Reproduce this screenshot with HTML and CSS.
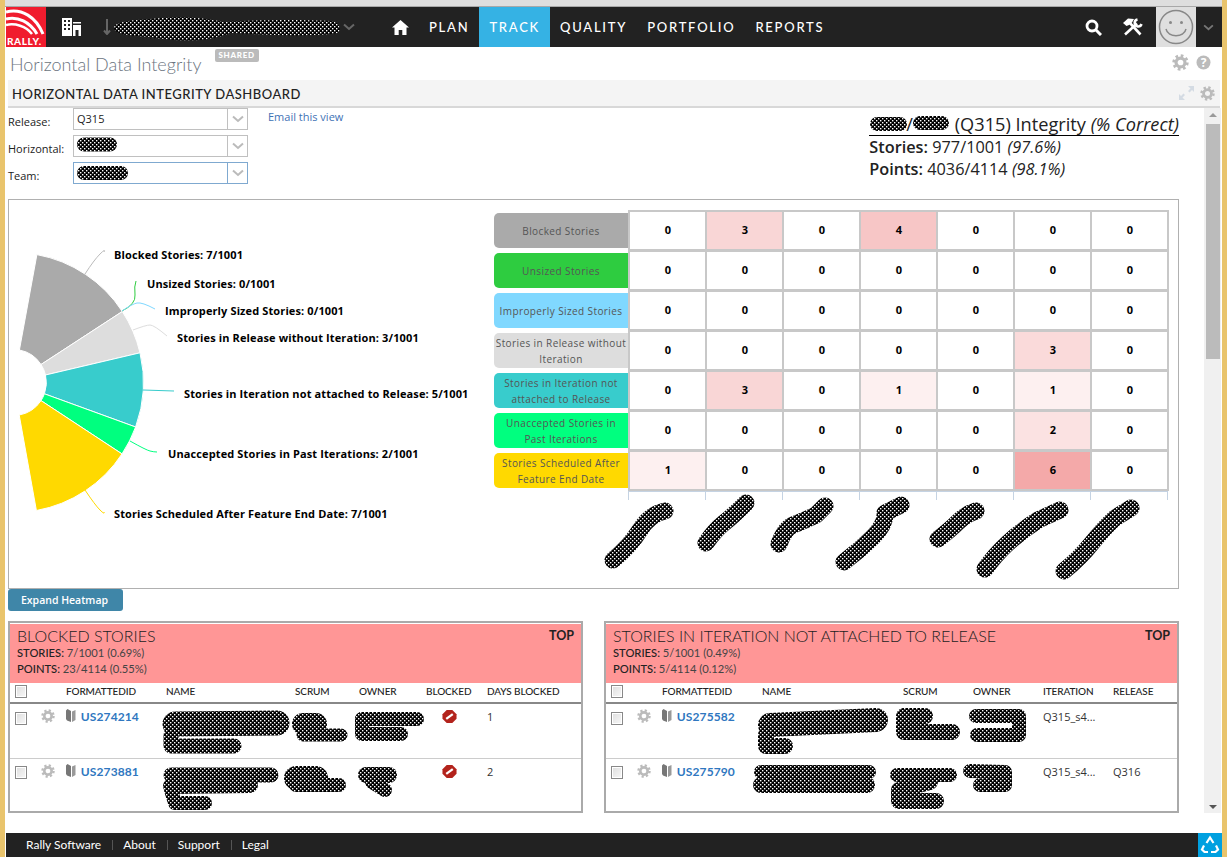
FILE: index.html
```html
<!DOCTYPE html>
<html lang="en">
<head>
    <meta charset="UTF-8">
    <title>Horizontal Data Integrity</title>
    <link rel="stylesheet" href="styles.css">
</head>
<body>
    <svg class="defs" width="0" height="0">
        <defs>
            <pattern id="dots" width="4" height="4" patternUnits="userSpaceOnUse">
                <rect width="4" height="4" fill="#000"/>
                <rect x="0" y="0" width="1.400" height="1.400" fill="#fff"/>
                <rect x="2" y="2" width="1.400" height="1.400" fill="#fff"/>
            </pattern>
            <symbol id="gear" viewBox="0 0 16 16">
                <circle cx="8" cy="8" r="4.2" fill="none" stroke="currentColor" stroke-width="3"/>
                <circle cx="8" cy="8" r="6.4" fill="none" stroke="currentColor" stroke-width="2.6" stroke-dasharray="2.5 2.53"/>
            </symbol>
            <symbol id="chevron" viewBox="0 0 12 8">
                <path d="M1 1.5l5 4.5 5-4.5" fill="none" stroke="currentColor" stroke-width="2"/>
            </symbol>
            <symbol id="book" viewBox="0 0 10 14">
                <path d="M0 1.5L1.5 0 5 2v11L1 11.5 0 10z" fill="#777"/>
                <path d="M6 2.5L9.5 1v10L6 13z" fill="#999"/>
            </symbol>
            <symbol id="blocked" viewBox="0 0 16 16">
                <polygon points="5,1 11,1 15.5,5.5 15.5,10.5 11,15 5,15 .5,10.5 .5,5.5" fill="#b3231c"/>
                <path d="M4.5 10.5l7-5" stroke="#fff" stroke-width="2.4"/>
            </symbol>
        </defs>
    </svg>

    <div class="frame">
        <nav class="topbar">
            <div class="logo">
                <svg class="logo-arcs" width="40" height="28" viewBox="0 0 40 28">
                    <path d="M0 5C16 1 30 10 37 27" fill="none" stroke="#fff" stroke-width="3"/>
                    <path d="M0 12C12 9 24 15 31 27" fill="none" stroke="#fff" stroke-width="3"/>
                    <path d="M0 18C9 16 20 19 26 27" fill="none" stroke="#fff" stroke-width="2.5"/>
                </svg>
                <span class="logo-text">RALLY.</span>
            </div>
            <svg class="nav-building" width="19" height="19" viewBox="0 0 19 19">
                <rect x="0" y="0" width="10" height="18" fill="#fff"/>
                <rect x="11" y="4" width="8" height="14" fill="#fff"/>
                <rect x="11" y="5.5" width="8" height="1.5" fill="#222"/>
                <rect x="13.5" y="12" width="3" height="6" fill="#222"/>
                <g fill="#222">
                    <rect x="2" y="2" width="2" height="2"/><rect x="6" y="2" width="2" height="2"/>
                    <rect x="2" y="6" width="2" height="2"/><rect x="6" y="6" width="2" height="2"/>
                    <rect x="2" y="10" width="2" height="2"/><rect x="6" y="10" width="2" height="2"/>
                </g>
            </svg>
            <svg class="nav-down" width="8" height="16" viewBox="0 0 8 16">
                <path d="M4 0v15M1 11.5L4 15l3-3.500" fill="none" stroke="#666" stroke-width="2"/>
            </svg>
            <div class="project-name"></div>
            <svg class="nav-chevron" width="12" height="8"><use href="#chevron"/></svg>

            <svg class="nav-home" width="17" height="15" viewBox="0 0 17 15">
                <path d="M8.500 0L17 7.500h-2.500V15H10.300v-5H6.700v5H2.500V7.500H0z" fill="#fff"/>
            </svg>
            <a class="nav-link">PLAN</a>
            <a class="nav-link nav-active">TRACK</a>
            <a class="nav-link">QUALITY</a>
            <a class="nav-link">PORTFOLIO</a>
            <a class="nav-link">REPORTS</a>

            <div class="nav-right">
                <svg width="17" height="17" viewBox="0 0 17 17">
                    <circle cx="7" cy="7" r="5" fill="none" stroke="#fff" stroke-width="2.800"/>
                    <path d="M10.500 10.500L16 16" stroke="#fff" stroke-width="3"/>
                </svg>
                <svg class="nav-tools" width="20" height="18" viewBox="0 0 20 18">
                    <path d="M6 4L17.500 16.500" stroke="#fff" stroke-width="2.600"/>
                    <path d="M0 5L5 .5 11 1 9 4.500 6 7 3.500 8z" fill="#fff"/>
                    <path d="M2 16.500L14 5.500" stroke="#fff" stroke-width="2.600"/>
                    <path d="M14.500 1.500A3.500 3.500 0 1 0 18.500 6" fill="none" stroke="#fff" stroke-width="2.500"/>
                </svg>
                <div class="avatar">
                    <svg width="36" height="36" viewBox="0 0 36 36">
                        <circle cx="18" cy="18" r="16.500" fill="none" stroke="#888" stroke-width="1.500"/>
                        <circle cx="12.500" cy="13.500" r="1.500" fill="#888"/>
                        <circle cx="23.500" cy="13.500" r="1.500" fill="#888"/>
                        <path d="M8 20c2 9 18 9 20 0" fill="none" stroke="#888" stroke-width="1.500"/>
                    </svg>
                </div>
                <svg class="nav-chevron-small" width="11" height="7"><use href="#chevron"/></svg>
            </div>
        </nav>

        <header class="page-title">
            <h1>Horizontal Data Integrity</h1>
            <span class="shared">SHARED</span>
            <div class="page-tools">
                <svg class="icon-gray" width="17" height="17"><use href="#gear"/></svg>
                <svg width="15" height="15" viewBox="0 0 15 15">
                    <circle cx="7.500" cy="7.500" r="7" fill="#bbb"/>
                    <text x="7.500" y="11.500" class="help-mark">?</text>
                </svg>
            </div>
        </header>

        <div class="panel-header">
            <h2>Horizontal Data Integrity Dashboard</h2>
            <div class="panel-tools">
                <svg width="15" height="14" viewBox="0 0 15 14">
                    <path d="M9 0h6v6l-2-2-2.500 2.500-1.500-1.500L11.500 2.500zM6 14H0V8l2 2 2.500-2.500L6 9l-2.500 2.500z" fill="#d4dbe3"/>
                </svg>
                <svg class="icon-gray" width="15" height="15"><use href="#gear"/></svg>
            </div>
        </div>

        <div class="content">
            <main class="main">
                <section class="controls">
                    <form class="filters">
                        <label class="filter-row">
                            <span class="filter-label">Release:</span>
                            <span class="combo"><span class="combo-value">Q315</span><span class="combo-trigger"><svg width="12" height="8"><use href="#chevron"/></svg></span></span>
                        </label>
                        <label class="filter-row">
                            <span class="filter-label">Horizontal:</span>
                            <span class="combo"><span class="combo-value"></span><span class="combo-trigger"><svg width="12" height="8"><use href="#chevron"/></svg></span></span>
                        </label>
                        <label class="filter-row">
                            <span class="filter-label">Team:</span>
                            <span class="combo combo-focus"><span class="combo-value"></span><span class="combo-trigger"><svg width="12" height="8"><use href="#chevron"/></svg></span></span>
                        </label>
                    </form>
                    <a class="email-link">Email this view</a>
                    <div class="summary">
                        <div class="summary-title"><span class="name-gap"></span>/<span class="name-gap"></span> (Q315) Integrity <em>(% Correct)</em></div>
                        <div class="summary-line"><span class="summary-key">Stories:</span> 977/1001 <em>(97.6%)</em></div>
                        <div class="summary-line"><span class="summary-key">Points:</span> 4036/4114 <em>(98.1%)</em></div>
                    </div>
                </section>

                <section class="chart-box">
                    <svg class="pie" width="485" height="388" viewBox="9 200 485 388">
                        <g stroke="#fff" stroke-width="1">
                            <path fill="#aaaaaa" d="M36.9 254.6A130 130 0 0 1 122.3 311.500L41 364.500A33 33 0 0 0 19.400 350z"/>
                            <path fill="#dddddd" d="M122.300 311.500A130 130 0 0 1 140 352.800L45.500 375A33 33 0 0 0 41 364.500z"/>
                            <path fill="#38cccc" d="M140 352.800A130 130 0 0 1 135.600 427L44.400 393.800A33 33 0 0 0 45.500 375z"/>
                            <path fill="#00ff7f" d="M135.600 427A130 130 0 0 1 122 453.900L41 400.600A33 33 0 0 0 44.400 393.800z"/>
                            <path fill="#ffd900" d="M122 453.900A130 130 0 0 1 36.400 510.500L19.200 415A33 33 0 0 0 41 400.600z"/>
                        </g>
                        <g fill="none" stroke-width="1">
                            <path stroke="#bbbbbb" d="M85 274Q94 260 100 254T104 252"/>
                            <path stroke="#2ecc40" d="M122 311Q136 304 135 295T136 281"/>
                            <path stroke="#80d8ff" d="M122 311Q132 304 137 303T155 309"/>
                            <path stroke="#dddddd" d="M133 330Q146 325 150 325T167 336"/>
                            <path stroke="#38cccc" d="M143 390L174 391"/>
                            <path stroke="#00ff7f" d="M130 441Q146 450 150 451T157 452"/>
                            <path stroke="#ffd900" d="M85 490Q95 505 100 510T104 512"/>
                        </g>
                        <g class="pie-labels">
                            <text x="114" y="259">Blocked Stories: 7/1001</text>
                            <text x="147" y="288">Unsized Stories: 0/1001</text>
                            <text x="165" y="315">Improperly Sized Stories: 0/1001</text>
                            <text x="177" y="342">Stories in Release without Iteration: 3/1001</text>
                            <text x="184" y="398">Stories in Iteration not attached to Release: 5/1001</text>
                            <text x="168" y="458">Unaccepted Stories in Past Iterations: 2/1001</text>
                            <text x="114" y="518">Stories Scheduled After Feature End Date: 7/1001</text>
                        </g>
                    </svg>

                    <div class="heat">
                        <div class="heat-grid">
                            <div class="heat-label label-blocked">Blocked Stories</div>
                            <div class="cell">0</div><div class="cell heat-3">3</div><div class="cell">0</div><div class="cell heat-4">4</div><div class="cell">0</div><div class="cell">0</div><div class="cell">0</div>
                            <div class="heat-label label-unsized">Unsized Stories</div>
                            <div class="cell">0</div><div class="cell">0</div><div class="cell">0</div><div class="cell">0</div><div class="cell">0</div><div class="cell">0</div><div class="cell">0</div>
                            <div class="heat-label label-improper">Improperly Sized Stories</div>
                            <div class="cell">0</div><div class="cell">0</div><div class="cell">0</div><div class="cell">0</div><div class="cell">0</div><div class="cell">0</div><div class="cell">0</div>
                            <div class="heat-label label-release">Stories in Release without Iteration</div>
                            <div class="cell">0</div><div class="cell">0</div><div class="cell">0</div><div class="cell">0</div><div class="cell">0</div><div class="cell heat-3b">3</div><div class="cell">0</div>
                            <div class="heat-label label-iteration">Stories in Iteration not attached to Release</div>
                            <div class="cell">0</div><div class="cell heat-3">3</div><div class="cell">0</div><div class="cell heat-1">1</div><div class="cell">0</div><div class="cell heat-1">1</div><div class="cell">0</div>
                            <div class="heat-label label-past">Unaccepted Stories in Past Iterations</div>
                            <div class="cell">0</div><div class="cell">0</div><div class="cell">0</div><div class="cell">0</div><div class="cell">0</div><div class="cell heat-2">2</div><div class="cell">0</div>
                            <div class="heat-label label-late">Stories Scheduled After Feature End Date</div>
                            <div class="cell heat-1">1</div><div class="cell">0</div><div class="cell">0</div><div class="cell">0</div><div class="cell">0</div><div class="cell heat-6">6</div><div class="cell">0</div>
                        </div>
                        <div class="heat-axis">
                            <span></span><span></span><span></span><span></span><span></span><span></span><span></span>
                        </div>
                    </div>
                </section>

                <button class="expand-btn" type="button">Expand Heatmap</button>

                <section class="boards">
                    <div class="board">
                        <div class="board-head">
                            <div class="board-title"><span>Blocked Stories</span><a class="board-top">TOP</a></div>
                            <div class="board-stat"><b>STORIES:</b> 7/1001 (0.69%)</div>
                            <div class="board-stat"><b>POINTS:</b> 23/4114 (0.55%)</div>
                        </div>
                        <table class="grid">
                            <colgroup><col class="c-check"><col class="c-gear"><col class="c-id"><col class="c-l1"><col class="c-l2"><col class="c-l3"><col class="c-l4"><col></colgroup>
                            <thead>
                                <tr><th class="td-check"><span class="check"></span></th><th></th><th>FormattedID</th><th>Name</th><th>Scrum</th><th>Owner</th><th>Blocked</th><th>Days Blocked</th></tr>
                            </thead>
                            <tbody>
                                <tr>
                                    <td class="td-check"><span class="check"></span></td>
                                    <td><svg class="icon-gray" width="14" height="14"><use href="#gear"/></svg></td>
                                    <td><svg class="book" width="10" height="14"><use href="#book"/></svg> <a class="story-id">US274214</a></td>
                                    <td></td><td></td><td></td>
                                    <td class="td-flag"><svg width="15" height="15"><use href="#blocked"/></svg></td>
                                    <td>1</td>
                                </tr>
                                <tr>
                                    <td class="td-check"><span class="check"></span></td>
                                    <td><svg class="icon-gray" width="14" height="14"><use href="#gear"/></svg></td>
                                    <td><svg class="book" width="10" height="14"><use href="#book"/></svg> <a class="story-id">US273881</a></td>
                                    <td></td><td></td><td></td>
                                    <td class="td-flag"><svg width="15" height="15"><use href="#blocked"/></svg></td>
                                    <td>2</td>
                                </tr>
                            </tbody>
                        </table>
                    </div>

                    <div class="board">
                        <div class="board-head">
                            <div class="board-title"><span>Stories in Iteration not attached to Release</span><a class="board-top">TOP</a></div>
                            <div class="board-stat"><b>STORIES:</b> 5/1001 (0.49%)</div>
                            <div class="board-stat"><b>POINTS:</b> 5/4114 (0.12%)</div>
                        </div>
                        <table class="grid">
                            <colgroup><col class="c-check"><col class="c-gear"><col class="c-id"><col class="c-r1"><col class="c-r2"><col class="c-r3"><col class="c-r4"><col></colgroup>
                            <thead>
                                <tr><th class="td-check"><span class="check"></span></th><th></th><th>FormattedID</th><th>Name</th><th>Scrum</th><th>Owner</th><th>Iteration</th><th>Release</th></tr>
                            </thead>
                            <tbody>
                                <tr>
                                    <td class="td-check"><span class="check"></span></td>
                                    <td><svg class="icon-gray" width="14" height="14"><use href="#gear"/></svg></td>
                                    <td><svg class="book" width="10" height="14"><use href="#book"/></svg> <a class="story-id">US275582</a></td>
                                    <td></td><td></td><td></td>
                                    <td>Q315_s4...</td><td></td>
                                </tr>
                                <tr>
                                    <td class="td-check"><span class="check"></span></td>
                                    <td><svg class="icon-gray" width="14" height="14"><use href="#gear"/></svg></td>
                                    <td><svg class="book" width="10" height="14"><use href="#book"/></svg> <a class="story-id">US275790</a></td>
                                    <td></td><td></td><td></td>
                                    <td>Q315_s4...</td><td>Q316</td>
                                </tr>
                            </tbody>
                        </table>
                    </div>
                </section>
            </main>

            <div class="scrollbar">
                <span class="arrow-up"></span>
                <span class="thumb"></span>
                <span class="arrow-down"></span>
            </div>
        </div>

        <footer class="footer">
            <a>Rally Software</a><a>About</a><a>Support</a><a>Legal</a>
            <div class="recycle">
                <svg width="20" height="20" viewBox="0 0 20 20">
                    <g fill="none" stroke="#fff" stroke-width="2.200">
                        <path d="M6.500 8L10 2.500 13.500 8"/>
                        <path d="M16 10.500l2 4-2.500 2.500H11"/>
                        <path d="M4 10.500l-2 4L4.500 17H8"/>
                    </g>
                </svg>
            </div>
        </footer>
    </div>

    <!-- blacked out names, drawn over the page -->
    <svg class="redactions" width="1227" height="859" viewBox="0 0 1227 859">
        <path fill="url(#dots)" d="M114 28C114 22 130 20 150 19C180 16 200 17 225 22C250 20 300 19 330 21C341 22 341 30 338 33C300 38 260 34 230 33C210 42 180 42 150 37C130 36 114 34 114 28Z"/>
        <g fill="none" stroke="url(#dots)" stroke-linecap="round" stroke-linejoin="round">
            <g stroke-width="14">
                <path d="M84 144.500H110"/>
                <path d="M84 173H121"/>
                <path d="M877 124H900"/>
                <path d="M920 123H942"/>
            </g>
            <g stroke-width="17">
                <path d="M613 560Q630 546 640 530T665 511"/>
                <path d="M706 543Q715 530 724 523T746 503"/>
                <path d="M779 544Q785 528 793 525T816 515L825 506"/>
                <path d="M844 562Q860 550 873 537T885 513L901 505"/>
                <path d="M938 539Q950 530 958 522T976 511"/>
                <path d="M985 569Q995 555 1008 543T1038 520L1060 510"/>
                <path d="M1064 571Q1080 558 1092 543T1115 518L1131 508"/>
            </g>
            <!-- left table -->
            <path stroke-width="25" d="M175 724L277 723"/>
            <path stroke-width="15" d="M171 735V746H234"/>
            <path stroke-width="22" d="M303 724H316"/>
            <path stroke-width="13" d="M303 735H341"/>
            <path stroke-width="14" d="M362 719H417"/>
            <path stroke-width="14" d="M362 719V734H401"/>
            <path stroke-width="15" d="M171 775H271"/>
            <path stroke-width="16" d="M171 786L250 785"/>
            <path stroke-width="14" d="M171 790L175 803H205"/>
            <path stroke-width="24" d="M296 778H316"/>
            <path stroke-width="14" d="M296 785H339"/>
            <path stroke-width="16" d="M366 775H389"/>
            <path stroke-width="14" d="M372 782L385 790"/>
            <!-- right table -->
            <path stroke-width="24" d="M770 725L876 720"/>
            <path stroke-width="16" d="M766 735V746H785"/>
            <path stroke-width="16" d="M905 716H925"/>
            <path stroke-width="16" d="M904 716V732H952"/>
            <path stroke-width="14" d="M976 716H1019V735H977"/>
            <path stroke-width="14" d="M761 772H869"/>
            <path stroke-width="16" d="M761 785H867"/>
            <path stroke-width="14" d="M897 775L950 775"/>
            <path stroke-width="16" d="M930 782L899 790V801H936"/>
            <path stroke-width="14" d="M970 771L1005 772V785H980"/>
        </g>
    </svg>
</body>
</html>
```

FILE: styles.css
```css
* {
    box-sizing: border-box;
}

html, body {
    margin: 0;
    padding: 0;
    height: 859px;
    overflow: hidden;
}

body {
    position: relative;
    font-family: 'Open Sans', sans-serif;
    font-size: 11px;
    color: #222;
    background-color: #fff;
}

.defs {
    position: absolute;
}

.redactions {
    position: absolute;
    top: 0;
    left: 0;
    pointer-events: none;
}

.frame {
    display: flex;
    flex-direction: column;
    height: 857px;
    border-left: 5px solid #e9c46c;
    border-right: 5px solid #e9c46c;
    padding-top: 7px;
    padding-left: 1px;
    background: linear-gradient(#dedede 6px, #a8a8a8 6px, #a8a8a8 7px, #fff 7px);
}

/* top navigation */
.topbar {
    display: flex;
    align-items: center;
    flex: 0 0 40px;
    background-color: #222;
    color: #fff;
    font-family: 'Lato', sans-serif;
}

.logo {
    position: relative;
    width: 40px;
    height: 40px;
    background-color: #f01c2e;
    overflow: hidden;
}

.logo-arcs {
    position: absolute;
    top: 0;
    left: 0;
}

.logo-text {
    position: absolute;
    left: 1px;
    bottom: 0;
    font-size: 10px;
    font-weight: 900;
    letter-spacing: .6px;
    color: #fff;
}

.nav-building {
    margin-left: 16px;
}

.nav-down {
    margin-left: 22px;
}

.project-name {
    width: 232px;
}

.nav-chevron {
    color: #666;
}

.nav-home {
    margin-left: 37px;
    margin-right: 10px;
}

.nav-link {
    height: 40px;
    padding: 0 10px;
    line-height: 40px;
    font-size: 13px;
    font-weight: 500;
    letter-spacing: 1.750px;
    color: #fff;
}

.nav-active {
    background-color: #35b2e4;
}

.nav-right {
    display: flex;
    align-items: center;
    margin-left: auto;
}

.nav-tools {
    margin-left: 21px;
}

.avatar {
    display: flex;
    align-items: center;
    justify-content: center;
    width: 40px;
    height: 40px;
    margin-left: 13px;
    background-color: #dfdfdf;
}

.nav-chevron-small {
    margin: 0 8px 0 7px;
    color: #777;
}

/* page title */
.page-title {
    display: flex;
    flex: 0 0 33px;
    padding-left: 4px;
}

.page-title h1 {
    margin: 6px 0 0;
    font-family: 'Lato', sans-serif;
    font-size: 18px;
    font-weight: 300;
    line-height: 22px;
    color: #6b7480;
}

.shared {
    align-self: flex-start;
    height: 13px;
    margin: 2px 0 0 13px;
    padding: 0 4px;
    border-radius: 2px;
    background-color: #bbb;
    color: #fff;
    font-family: 'Lato', sans-serif;
    font-size: 8px;
    font-weight: 900;
    line-height: 13px;
    letter-spacing: .7px;
}

.page-tools {
    display: flex;
    align-items: center;
    gap: 7px;
    margin: 0 11px 0 auto;
    height: 30px;
}

.icon-gray {
    color: #bbb;
}

.help-mark {
    font-size: 12px;
    font-weight: 700;
    text-anchor: middle;
    fill: #fff;
}

/* dashboard panel */
.panel-header {
    display: flex;
    align-items: center;
    flex: 0 0 28px;
    margin-left: 2px;
    margin-right: 2px;
    padding-left: 4px;
    border-bottom: 2px solid #d8d8d8;
    background-color: #f4f4f4;
}

.panel-header h2 {
    margin: 2px 0 0;
    font-family: 'Lato', sans-serif;
    font-size: 13px;
    font-weight: 500;
    letter-spacing: .5px;
    text-transform: uppercase;
    color: #222;
}

.panel-tools {
    display: flex;
    align-items: center;
    gap: 6px;
    margin-left: auto;
    padding-right: 5px;
}

.content {
    display: flex;
    flex: 1 1 auto;
    min-height: 0;
}

.main {
    flex: 0 0 1198px;
    padding-left: 2px;
}

.controls {
    display: flex;
    height: 91px;
}

.filters {
    display: flex;
    flex-direction: column;
    gap: 5px;
}

.filter-row {
    display: flex;
    align-items: flex-end;
    height: 22px;
}

.filter-label {
    width: 65px;
    font-size: 11px;
    line-height: 17px;
}

.combo {
    display: flex;
    width: 175px;
    height: 22px;
    border: 1px solid #c0c0c0;
    background-color: #fff;
}

.combo-focus {
    border-color: #7fa9d0;
}

.combo-focus .combo-trigger {
    border-left-color: #7fa9d0;
}

.combo-value {
    flex: 1;
    padding-left: 3px;
    line-height: 19px;
    font-size: 11px;
}

.combo-trigger {
    display: flex;
    align-items: center;
    justify-content: center;
    width: 20px;
    border-left: 1px solid #c0c0c0;
    color: #bbb;
}

.email-link {
    margin: 1px 0 0 20px;
    font-size: 11px;
    line-height: 15px;
    color: #3f72b5;
}

.summary {
    margin-left: 526px;
    padding-top: 5px;
    font-size: 16.300px;
    line-height: 22px;
}

.summary-title {
    display: inline-block;
    border-bottom: 1px solid #000;
    font-size: 18.200px;
    line-height: 22px;
    white-space: nowrap;
}

.name-gap {
    display: inline-block;
    width: 37px;
}

.summary-key {
    font-weight: 600;
}

.chart-box {
    display: flex;
    width: 1171px;
    height: 390px;
    border: 1px solid #b0b0b0;
}

.pie-labels text {
    font-family: 'Open Sans', sans-serif;
    font-size: 11px;
    font-weight: 700;
    letter-spacing: .12px;
    fill: #000;
}

.heat {
    padding-top: 10px;
}

.heat-grid {
    display: grid;
    grid-template-columns: 135px repeat(7, 77px);
    grid-auto-rows: 40px;
}

.heat-label {
    display: flex;
    align-items: center;
    justify-content: center;
    height: 35px;
    margin: 3px 1px 0 0;
    padding: 0 1px;
    border-radius: 5px 0 0 5px;
    text-align: center;
    font-size: 10px;
    line-height: 16px;
    letter-spacing: .4px;
    color: #555;
}

.label-blocked { background-color: #aaaaaa; }
.label-unsized { background-color: #2ecc40; }
.label-improper { background-color: #80d8ff; }
.label-release { background-color: #dddddd; }
.label-iteration { background-color: #38cccc; }
.label-past { background-color: #00ff7f; }
.label-late { background-color: #ffd900; }

.cell {
    display: flex;
    align-items: center;
    justify-content: center;
    margin: 0 -1px -1px -1px;
    padding: 0 0 2px 1px;
    border: 2px solid #c8c8c8;
    font-size: 11px;
    font-weight: 700;
    color: #000;
}

.heat-1 { background-color: #fdf0f0; }
.heat-2 { background-color: #fbe2e2; }
.heat-3 { background-color: #f9d6d6; }
.heat-3b { background-color: #fadada; }
.heat-4 { background-color: #f7c6c6; }
.heat-6 { background-color: #f4a9a9; }

.heat-axis {
    display: flex;
    height: 10px;
    margin-left: 134px;
    border-top: 2px solid #c5d3e3;
    border-right: 1px solid #c5d3e3;
}

.heat-axis span {
    width: 77px;
    border-left: 1px solid #c5d3e3;
}

.expand-btn {
    display: block;
    width: 115px;
    height: 22px;
    padding: 0 2px 0 0;
    border: none;
    border-radius: 3px;
    background-color: #3f86a8;
    color: #fff;
    font-family: 'Open Sans', sans-serif;
    font-size: 10.500px;
    font-weight: 600;
}

/* story tables */
.boards {
    display: flex;
    gap: 21px;
    margin-top: 10px;
}

.board {
    width: 575px;
    height: 192px;
    border: 2px solid #aaa;
    overflow: hidden;
}

.board-head {
    height: 59px;
    margin-top: 1px;
    padding: 3px 7px 0 7px;
    background-color: #ff9696;
    font-family: 'Lato', sans-serif;
}

.board-title {
    display: flex;
    justify-content: space-between;
    align-items: center;
    height: 17px;
    margin-bottom: 1px;
    font-size: 16px;
    font-weight: 300;
    text-transform: uppercase;
    color: #222;
}

.board-top {
    font-size: 12.500px;
    font-weight: 700;
}

.board-stat {
    font-size: 11.200px;
    line-height: 16px;
    color: #444;
}

.board-stat b {
    font-weight: 500;
    color: #222;
}

.grid {
    width: 100%;
    table-layout: fixed;
    border-collapse: collapse;
}

.c-check { width: 28px; }
.c-gear { width: 24px; }
.c-id { width: 100px; }
.c-l1 { width: 129px; }
.c-l2 { width: 64px; }
.c-l3 { width: 67px; }
.c-l4 { width: 61px; }
.c-r1 { width: 141px; }
.c-r2 { width: 70px; }
.c-r3 { width: 70px; }
.c-r4 { width: 70px; }

.grid th {
    height: 20px;
    padding: 0 0 3px 4px;
    border-bottom: 2px solid #888;
    font-family: 'Lato', sans-serif;
    font-size: 10px;
    font-weight: 500;
    letter-spacing: -.1px;
    text-align: left;
    text-transform: uppercase;
    color: #222;
}

.grid td {
    height: 55px;
    padding: 5px 0 0 4px;
    border-bottom: 1px solid #ccc;
    vertical-align: top;
    font-size: 11px;
    line-height: 16px;
    color: #333;
}

.grid td:nth-child(2) {
    padding-left: 3px;
}

.grid .td-check {
    padding-left: 5px;
}

.grid td.td-flag {
    padding-left: 20px;
}

.check {
    display: inline-block;
    width: 12px;
    height: 13px;
    border: 1px solid #888;
    background: linear-gradient(135deg, #ddd, #f8f8f8);
    box-shadow: inset 0 0 0 1px #fff;
    vertical-align: middle;
}

.book {
    vertical-align: -2px;
    margin-right: 2px;
}

.story-id {
    font-family: 'Lato', sans-serif;
    font-size: 12px;
    font-weight: 700;
    letter-spacing: .1px;
    color: #2f77c0;
}

.scrollbar {
    display: flex;
    flex-direction: column;
    align-items: center;
    width: 17px;
    height: 705px;
    background-color: #f0f0f0;
}

.arrow-up {
    margin-top: 5px;
    border: 4px solid transparent;
    border-top: none;
    border-bottom: 4px solid #999;
}

.thumb {
    width: 14px;
    height: 235px;
    margin-top: 7px;
    background-color: #bbb;
}

.arrow-down {
    margin-top: auto;
    margin-bottom: 4px;
    border: 4px solid transparent;
    border-bottom: none;
    border-top: 4px solid #555;
}

/* footer */
.footer {
    display: flex;
    align-items: center;
    flex: 0 0 24px;
    margin-top: auto;
    padding-left: 20px;
    background-color: #222;
    font-family: 'Lato', sans-serif;
    font-size: 12px;
    color: #fff;
}

.footer a {
    padding-right: 11px;
    margin-right: 10px;
    border-right: 1px solid #555;
    line-height: 10px;
}

.footer a:last-of-type {
    border-right: none;
}

.recycle {
    display: flex;
    align-items: center;
    justify-content: center;
    width: 24px;
    height: 24px;
    margin-left: auto;
    background-color: #00a0e0;
}
```
